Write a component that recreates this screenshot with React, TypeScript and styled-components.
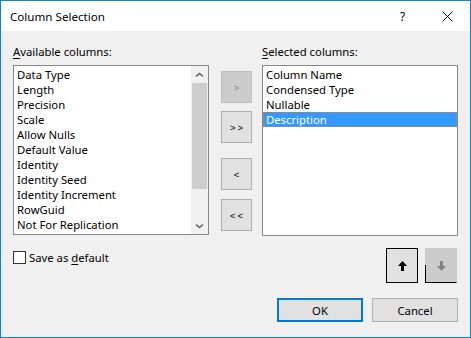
import styled, { createGlobalStyle } from "styled-components";

const GlobalStyle = createGlobalStyle`
  html, body {
    margin: 0;
    padding: 0;
    background: #ffffff;
  }
  * {
    box-sizing: border-box;
  }
`

const FONT = `"Noto Sans", "Liberation Sans", sans-serif`

const Window = styled.div`
  width: 471px;
  height: 338px;
  border: 1px solid #1a7fd4;
  background: #f0f0f0;
  display: flex;
  flex-direction: column;
  font-family: ${FONT};
  font-size: 11.3px;
  color: #000;
`

const TitleBar = styled.div`
  height: 30px;
  background: #ffffff;
  display: flex;
  align-items: center;
  padding-left: 9px;
`

const Title = styled.div`
  flex: 1;
  font-size: 11.6px;
  padding-top: 1px;
`

const TitleButton = styled.div`
  width: 45px;
  height: 30px;
  display: flex;
  align-items: center;
  justify-content: center;
  font-size: 12px;
`

const Body = styled.div`
  flex: 1;
  display: flex;
  flex-direction: column;
  padding: 13px 12px 15px 12px;
`

const Columns = styled.div`
  display: flex;
  align-items: flex-start;
`

const Column = styled.div`
  width: 196px;
  display: flex;
  flex-direction: column;
`

const Label = styled.div`
  height: 16px;
  line-height: 16px;
  margin-bottom: 5px;
  u {
    text-decoration-thickness: 1px;
    text-underline-offset: 2px;
  }
`

const ListBox = styled.div<{ $h: number }>`
  height: ${(p) => p.$h}px;
  border: 1px solid #828790;
  background: #ffffff;
  display: flex;
  overflow: hidden;
`

const Items = styled.div`
  flex: 1;
  padding-top: 1px;
`

const Item = styled.div<{ $selected?: boolean }>`
  height: 15px;
  line-height: 15px;
  padding-left: 3px;
  white-space: nowrap;
  background: ${(p) => (p.$selected ? "#3399ff" : "transparent")};
  color: ${(p) => (p.$selected ? "#ffffff" : "#000000")};
  outline: ${(p) => (p.$selected ? "1px dotted #e07a1a" : "none")};
  outline-offset: -1px;
`

const ScrollBar = styled.div`
  width: 17px;
  background: #f0f0f0;
  display: flex;
  flex-direction: column;
`

const ScrollArrow = styled.div`
  height: 17px;
  display: flex;
  align-items: center;
  justify-content: center;
`

const ScrollTrack = styled.div`
  flex: 1;
  display: flex;
  flex-direction: column;
`

const ScrollThumb = styled.div`
  height: 106px;
  margin: 0 1px;
  background: #cdcdcd;
`

const Middle = styled.div`
  width: 53px;
  display: flex;
  flex-direction: column;
  padding-left: 12px;
  padding-top: 27px;
`

const MoveButton = styled.div<{ $disabled?: boolean; $gap: number }>`
  width: 31px;
  height: 32px;
  margin-top: ${(p) => p.$gap}px;
  border: 1px solid ${(p) => (p.$disabled ? "#bfbfbf" : "#adadad")};
  background: ${(p) => (p.$disabled ? "#cccccc" : "#e1e1e1")};
  color: ${(p) => (p.$disabled ? "#838383" : "#000000")};
  display: flex;
  align-items: center;
  justify-content: center;
  padding-left: 2px;
  font-family: "Liberation Sans", sans-serif;
  font-size: 9.5px;
  letter-spacing: 2px;
`

const BottomRow = styled.div`
  display: flex;
  align-items: flex-start;
  margin-top: 12px;
`

const CheckRow = styled.label`
  flex: 1;
  display: flex;
  align-items: center;
  gap: 3px;
  margin-top: 3px;
  line-height: 13px;
  u {
    text-decoration-thickness: 1px;
    text-underline-offset: 2px;
  }
`

const CheckBox = styled.span`
  width: 13px;
  height: 13px;
  border: 1px solid #333333;
  background: #ffffff;
`

const OrderButtons = styled.div`
  display: flex;
  gap: 7px;
  margin-right: 1px;
`

const OrderButton = styled.div<{ $disabled?: boolean }>`
  position: relative;
  width: 32px;
  height: 35px;
  display: flex;
  align-items: center;
  justify-content: center;
  background: ${(p) => (p.$disabled ? "#cccccc" : "#e1e1e1")};
  border: 1px solid ${(p) => (p.$disabled ? "#cccccc" : "#000000")};
  border-bottom-color: #000000;
  ${(p) =>
    p.$disabled &&
    `
    &::before {
      content: "";
      position: absolute;
      left: -1px;
      bottom: -1px;
      width: 1px;
      height: 18px;
      background: #000;
    }
  `}
`

const Footer = styled.div`
  margin-top: auto;
  display: flex;
  justify-content: flex-end;
  gap: 9px;
`

const DialogButton = styled.div<{ $default?: boolean }>`
  width: 86px;
  height: 24px;
  display: flex;
  align-items: center;
  justify-content: center;
  background: #e1e1e1;
  border: ${(p) => (p.$default ? "2px solid #0078d7" : "1px solid #adadad")};
`

const Chevron = ({ down }: { down?: boolean }) => (
  <svg width="9" height="6" viewBox="0 0 9 6">
    <polyline
      points={down ? "1,1.5 4.5,4.5 8,1.5" : "1,4.5 4.5,1.5 8,4.5"}
      fill="none"
      stroke="#606060"
      strokeWidth="1.6"
    />
  </svg>
)

const Arrow = ({ down, color }: { down?: boolean; color: string }) => (
  <svg width="9" height="10" viewBox="0 0 9 10">
    <polygon
      points={
        down
          ? "4.5,10 9,5 6,5 6,0 3,0 3,5 0,5"
          : "4.5,0 9,5 6,5 6,10 3,10 3,5 0,5"
      }
      fill={color}
    />
  </svg>
)

const available = [
  "Data Type",
  "Length",
  "Precision",
  "Scale",
  "Allow Nulls",
  "Default Value",
  "Identity",
  "Identity Seed",
  "Identity Increment",
  "RowGuid",
  "Not For Replication",
]

const selected = ["Column Name", "Condensed Type", "Nullable", "Description"]

const App = () => {
  return (
    <Window>
      <GlobalStyle />
      <TitleBar>
        <Title>Column Selection</Title>
        <TitleButton>?</TitleButton>
        <TitleButton>
          <svg width="11" height="11" viewBox="0 0 11 11">
            <path d="M0.5 0.5 L10.5 10.5 M10.5 0.5 L0.5 10.5" stroke="#000" strokeWidth="1" />
          </svg>
        </TitleButton>
      </TitleBar>

      <Body>
        <Columns>
          <Column>
            <Label>
              <u>A</u>vailable columns:
            </Label>
            <ListBox $h={170}>
              <Items>
                {available.map((name) => (
                  <Item key={name}>{name}</Item>
                ))}
              </Items>
              <ScrollBar>
                <ScrollArrow>
                  <Chevron />
                </ScrollArrow>
                <ScrollTrack>
                  <ScrollThumb />
                </ScrollTrack>
                <ScrollArrow>
                  <Chevron down />
                </ScrollArrow>
              </ScrollBar>
            </ListBox>
          </Column>

          <Middle>
            <MoveButton $disabled $gap={0}>&gt;</MoveButton>
            <MoveButton $gap={8}>&gt;&gt;</MoveButton>
            <MoveButton $gap={15}>&lt;</MoveButton>
            <MoveButton $gap={9}>&lt;&lt;</MoveButton>
          </Middle>

          <Column>
            <Label>
              <u>S</u>elected columns:
            </Label>
            <ListBox $h={171}>
              <Items>
                {selected.map((name, i) => (
                  <Item key={name} $selected={i === selected.length - 1}>
                    {name}
                  </Item>
                ))}
              </Items>
            </ListBox>
          </Column>
        </Columns>

        <BottomRow>
          <CheckRow>
            <CheckBox />
            <span>
              Save as <u>d</u>efault
            </span>
          </CheckRow>
          <OrderButtons>
            <OrderButton>
              <Arrow color="#000000" />
            </OrderButton>
            <OrderButton $disabled>
              <Arrow down color="#838383" />
            </OrderButton>
          </OrderButtons>
        </BottomRow>

        <Footer>
          <DialogButton $default>OK</DialogButton>
          <DialogButton>Cancel</DialogButton>
        </Footer>
      </Body>
    </Window>
  )
}

export default App;
